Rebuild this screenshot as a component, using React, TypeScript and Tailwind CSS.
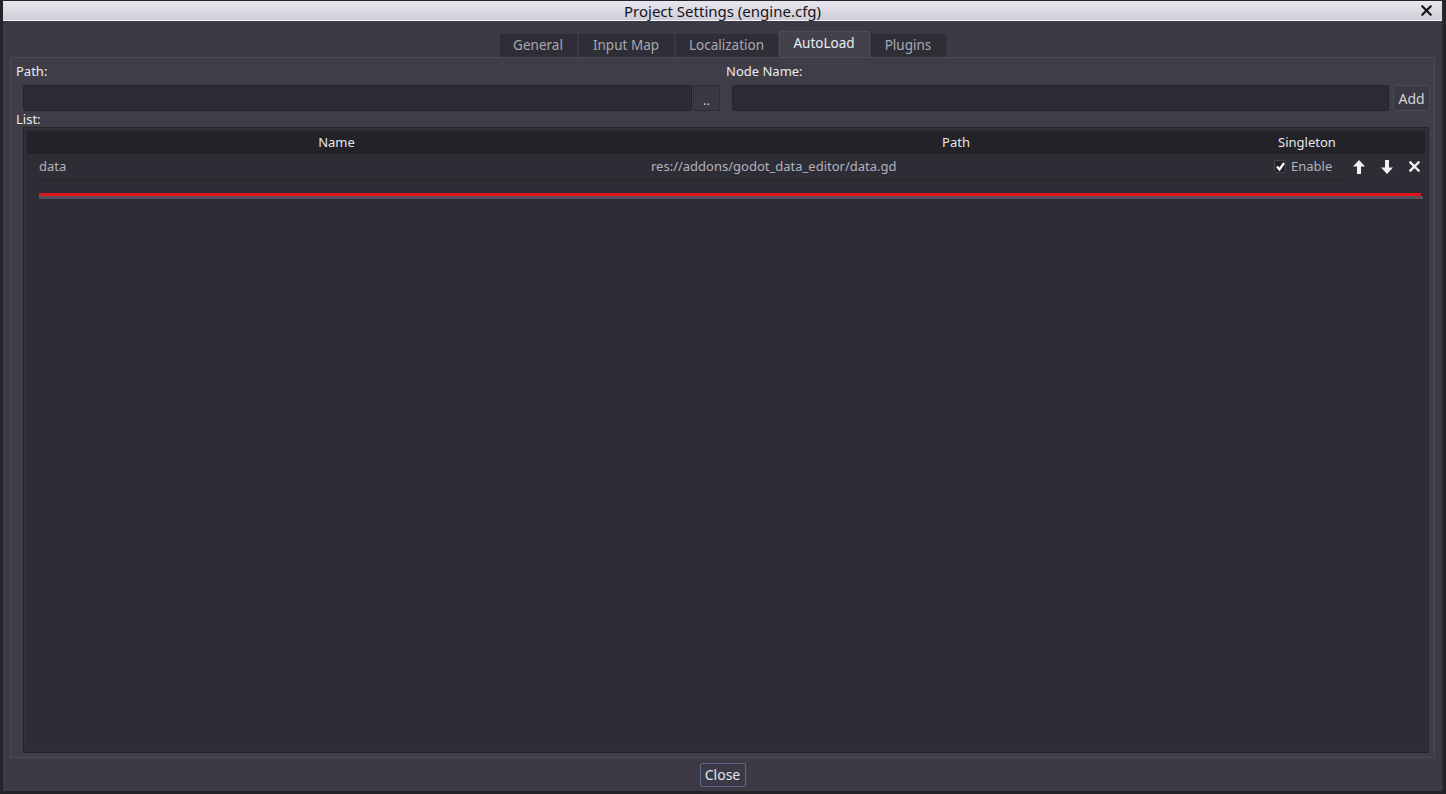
import { X } from 'lucide-react';

const font = { fontFamily: '"Noto Sans", "Open Sans", sans-serif' };

const tabs = [
  { label: 'General', w: 'w-[79px]' },
  { label: 'Input Map', w: 'w-[97px]' },
  { label: 'Localization', w: 'w-[104px]' },
  { label: 'AutoLoad', w: 'w-[91px]', active: true },
  { label: 'Plugins', w: 'w-[77px]' },
];

function Tabs() {
  return (
    <div className="flex justify-center items-end h-[36px]">
      {tabs.map((t) =>
        t.active ? (
          <div
            key={t.label}
            className={`${t.w} h-[26px] flex items-center justify-center text-[13.5px] text-[#ececf0] bg-[#42414c] border border-[#4d4c57] border-b-0 rounded-t-[2px] pb-[2px]`}
          >
            {t.label}
          </div>
        ) : (
          <div
            key={t.label}
            className={`${t.w} h-[24px] flex items-center justify-center text-[13.5px] text-[#a9a8b2] bg-[#2f2e37] border border-[#3a3943] border-b-0 rounded-t-[2px]`}
          >
            {t.label}
          </div>
        )
      )}
    </div>
  );
}

function Field({ className }: { className?: string }) {
  return (
    <div
      className={`h-[26px] bg-[#2c2b33] border border-[#26252c] rounded-[2px] ${className ?? ''}`}
    />
  );
}

function BoldArrow({ down }: { down?: boolean }) {
  return (
    <svg width="12" height="14" viewBox="0 0 12 14" className={down ? 'rotate-180' : ''}>
      <path d="M6 0 L12 6.5 L8 6.5 L8 14 L4 14 L4 6.5 L0 6.5 Z" fill="#f2f2f4" />
    </svg>
  );
}

function BoldX() {
  return (
    <svg width="11" height="11" viewBox="0 0 11 11">
      <path d="M1.5 1.5 L9.5 9.5 M9.5 1.5 L1.5 9.5" stroke="#f2f2f4" strokeWidth="2.4" strokeLinecap="square" />
    </svg>
  );
}

function AutoloadList() {
  return (
    <div className="flex-1 ml-[7px] mr-[1px] mb-[1px] bg-[#2e2d36] border border-[#25242b] shadow-[inset_0_0_0_1px_#33323b] p-[3px] flex flex-col">
      <div className="grid grid-cols-[618px_622px_80px_1fr] h-[23px] bg-[#232228] text-[13px] text-[#e6e6ea] items-center">
        <div className="text-center pl-[1px]">Name</div>
        <div className="text-center">Path</div>
        <div className="text-center">Singleton</div>
        <div />
      </div>
      <div className="grid grid-cols-[618px_622px_80px_1fr] h-[25px] items-center text-[13px] text-[#b3b2ba]">
        <div className="pl-[12px]">data</div>
        <div className="pl-[6px]">res://addons/godot_data_editor/data.gd</div>
        <div className="flex items-center pl-[7px] gap-[5px]">
          <span className="w-[12px] h-[13px] rounded-[2px] bg-[#222127] border border-[#45444e] flex items-center justify-center">
            <svg width="9" height="9" viewBox="0 0 9 9">
              <path d="M1 4.5 L3.5 7.5 L8 1" stroke="#ffffff" strokeWidth="2.2" fill="none" />
            </svg>
          </span>
          <span>Enable</span>
        </div>
        <div className="flex items-center pl-[6px] gap-[16px]">
          <BoldArrow />
          <BoldArrow down />
          <BoldX />
        </div>
      </div>
      <div className="ml-[12px] mr-[82px] h-px bg-[#26252c]" />
      <div className="ml-[12px] mr-[4px] mt-[13px]">
        <div className="h-[3px] bg-[#e3141c]" />
        <div className="h-[3px] bg-[#55545c] mr-[-2px]" />
      </div>
    </div>
  );
}

export default function App() {
  return (
    <div className="w-[1446px] h-[794px] bg-[#24232a] pl-[3px] pt-[1px] overflow-hidden" style={font}>
      <div className="w-[1440px] h-[790px] bg-[#3c3b45] flex flex-col border-r border-[#2d2c34]">
        <div className="relative h-[20px] bg-gradient-to-b from-[#e8e6ee] to-[#cfcdd7] border-b border-[#f4f4f8] flex items-center justify-center">
          <span className="text-[15px] text-[#141418] leading-none pt-[2px]">Project Settings (engine.cfg)</span>
          <X size={17} strokeWidth={3} className="absolute right-[7px] top-[1px] text-[#111]" />
        </div>
        <Tabs />
        <div className="flex-1 mx-[7px] bg-[#3f3e48] border border-[#4c4b56] rounded-[2px] flex flex-col pt-[4px] pr-[4px] pb-[3px] pl-[5px]">
          <div className="flex text-[13px] text-[#ebebef] h-[20px] items-center">
            <div className="w-[710px]">Path:</div>
            <div>Node Name:</div>
          </div>
          <div className="flex items-center mt-[3px] pl-[7px] gap-[1px]">
            <Field className="w-[670px]" />
            <button className="w-[28px] h-[26px] bg-[#3a3943] border border-[#2f2e37] rounded-[2px] text-[#d0d0d6] text-[13px] leading-none pt-[4px]">
              ..
            </button>
            <Field className="w-[658px] ml-[11px]" />
            <button className="w-[37px] h-[26px] ml-[3px] bg-[#3a3943] border border-[#4a4954] rounded-[2px] text-[#d4d4da] text-[14px]">
              Add
            </button>
          </div>
          <div className="text-[13px] text-[#ebebef] h-[16px] leading-[16px]">List:</div>
          <AutoloadList />
        </div>
        <div className="h-[33px] flex items-center justify-center">
          <button className="w-[46px] h-[24px] bg-[#3a3945] border border-[#5a6a88] rounded-[2px] text-[14px] text-[#e6e6ea]">
            Close
          </button>
        </div>
      </div>
    </div>
  );
}
